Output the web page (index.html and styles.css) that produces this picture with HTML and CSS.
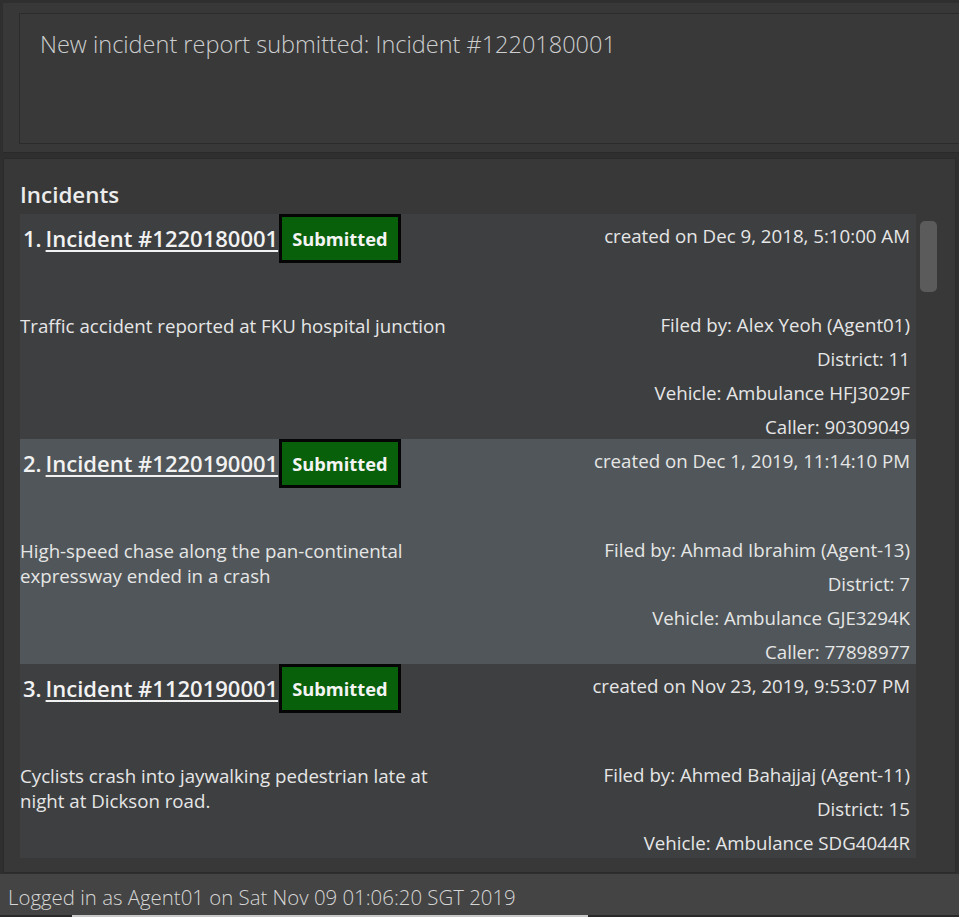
FILE: index.html
```html
<!DOCTYPE html>
<html lang="en">
<head>
<meta charset="utf-8">
<title>Incident Manager</title>
<link rel="stylesheet" href="styles.css">
</head>
<body>
<div class="app">
  <section class="top-panel">
    <div class="result-box">New incident report submitted: Incident #1220180001</div>
  </section>
  <section class="list-panel">
    <h2 class="list-heading">Incidents</h2>
    <div class="list-area">
      <div class="viewport">
        <article class="card">
          <div class="title"><span class="num">1.</span><span class="link">Incident #1220180001</span><span class="badge">Submitted</span></div>
          <div class="created">created on Dec 9, 2018, 5:10:00 AM</div>
          <div class="desc">Traffic accident reported at FKU hospital junction</div>
          <div class="meta">
            <span>Filed by: Alex Yeoh (Agent01)</span>
            <span>District: 11</span>
            <span>Vehicle: Ambulance HFJ3029F</span>
            <span>Caller: 90309049</span>
          </div>
        </article>
        <article class="card selected">
          <div class="title"><span class="num">2.</span><span class="link">Incident #1220190001</span><span class="badge">Submitted</span></div>
          <div class="created">created on Dec 1, 2019, 11:14:10 PM</div>
          <div class="desc">High-speed chase along the pan-continental expressway ended in a crash</div>
          <div class="meta">
            <span>Filed by: Ahmad Ibrahim (Agent-13)</span>
            <span>District: 7</span>
            <span>Vehicle: Ambulance GJE3294K</span>
            <span>Caller: 77898977</span>
          </div>
        </article>
        <article class="card">
          <div class="title"><span class="num">3.</span><span class="link">Incident #1120190001</span><span class="badge">Submitted</span></div>
          <div class="created">created on Nov 23, 2019, 9:53:07 PM</div>
          <div class="desc">Cyclists crash into jaywalking pedestrian late at night at Dickson road.</div>
          <div class="meta">
            <span>Filed by: Ahmed Bahajjaj (Agent-11)</span>
            <span>District: 15</span>
            <span>Vehicle: Ambulance SDG4044R</span>
          </div>
        </article>
      </div>
      <div class="scrolltrack"><div class="thumb"></div></div>
    </div>
  </section>
  <footer class="status-bar">Logged in as Agent01 on Sat Nov 09 01:06:20 SGT 2019</footer>
  <div class="bottom-strip"><div class="strip-fill"></div></div>
</div>
</body>
</html>
```
FILE: styles.css
```css
html, body {
  margin: 0;
  padding: 0;
}
body {
  width: 959px;
  height: 917px;
  overflow: hidden;
  background: #2f2f2f;
  font-family: "Open Sans", "Noto Sans", sans-serif;
  color: #e4e4e4;
}
.app {
  display: flex;
  flex-direction: column;
  height: 917px;
  padding-top: 3px;
  box-sizing: border-box;
}
.top-panel {
  margin-left: 3px;
  height: 150px;
  box-sizing: border-box;
  background: #383838;
  border-bottom: 1px solid #2a2a2a;
  padding: 10px 0 0 16px;
  overflow: hidden;
}
.result-box {
  width: 960px;
  height: 131px;
  box-sizing: border-box;
  border: 1px solid #2b2b2b;
  background: #393939;
  padding: 12px 0 0 20px;
  font-size: 23.5px;
  font-weight: 300;
  line-height: 36px;
  color: #cdcecf;
}
.list-panel {
  margin: 5px 3px 0 3px;
  height: 716px;
  box-sizing: border-box;
  background: #383838;
  border: 1px solid #2b2b2b;
  padding: 0 0 0 16px;
  display: flex;
  flex-direction: column;
}
.list-heading {
  margin: 0;
  padding-top: 20px;
  height: 55px;
  box-sizing: border-box;
  font-size: 22.4px;
  font-weight: 600;
  line-height: 32px;
  color: #ececec;
}
.list-area {
  display: flex;
  height: 644px;
}
.viewport {
  width: 896px;
  height: 644px;
  overflow: hidden;
}
.scrolltrack {
  width: 17px;
  margin-left: 4px;
  padding-top: 7px;
}
.thumb {
  width: 17px;
  height: 71px;
  border-radius: 5px;
  background: #5b5b5b;
}
.card {
  height: 225px;
  box-sizing: border-box;
  background: #3d3f41;
  display: grid;
  grid-template-columns: 1fr auto;
  grid-template-rows: 49px auto;
  row-gap: 50px;
  padding-right: 6px;
  font-size: 18.7px;
}
.card.selected {
  background: #505659;
}
.title {
  display: flex;
  align-items: center;
  padding-left: 3px;
  font-size: 22px;
  font-weight: 600;
  color: #f2f2f2;
}
.num {
  margin-right: 4px;
}
.link {
  text-decoration: underline;
  text-decoration-thickness: 1.5px;
  text-underline-offset: 3px;
}
.badge {
  margin-left: 1px;
  height: 49px;
  box-sizing: border-box;
  border: 3px solid #050505;
  background: #09600a;
  padding: 0 10px;
  font-size: 18.3px;
  font-weight: 700;
  line-height: 43px;
  color: #f4f4f4;
}
.created {
  padding-top: 10px;
  line-height: 24px;
  text-align: right;
  color: #e6e6e6;
}
.desc {
  max-width: 445px;
  line-height: 25px;
  color: #e6e6e6;
}
.meta {
  display: flex;
  flex-direction: column;
  align-items: flex-end;
  gap: 10px;
  line-height: 24px;
  color: #e6e6e6;
}
.status-bar {
  margin-top: 1px;
  height: 41px;
  background: #444444;
  padding-left: 8px;
  font-size: 20.4px;
  font-weight: 300;
  line-height: 46px;
  color: #d6d6d6;
  overflow: hidden;
  white-space: nowrap;
}
.bottom-strip {
  height: 2px;
  background: #2a2a2a;
  padding-left: 72px;
}
.strip-fill {
  width: 516px;
  height: 2px;
  background: #c8c8c8;
}
```
